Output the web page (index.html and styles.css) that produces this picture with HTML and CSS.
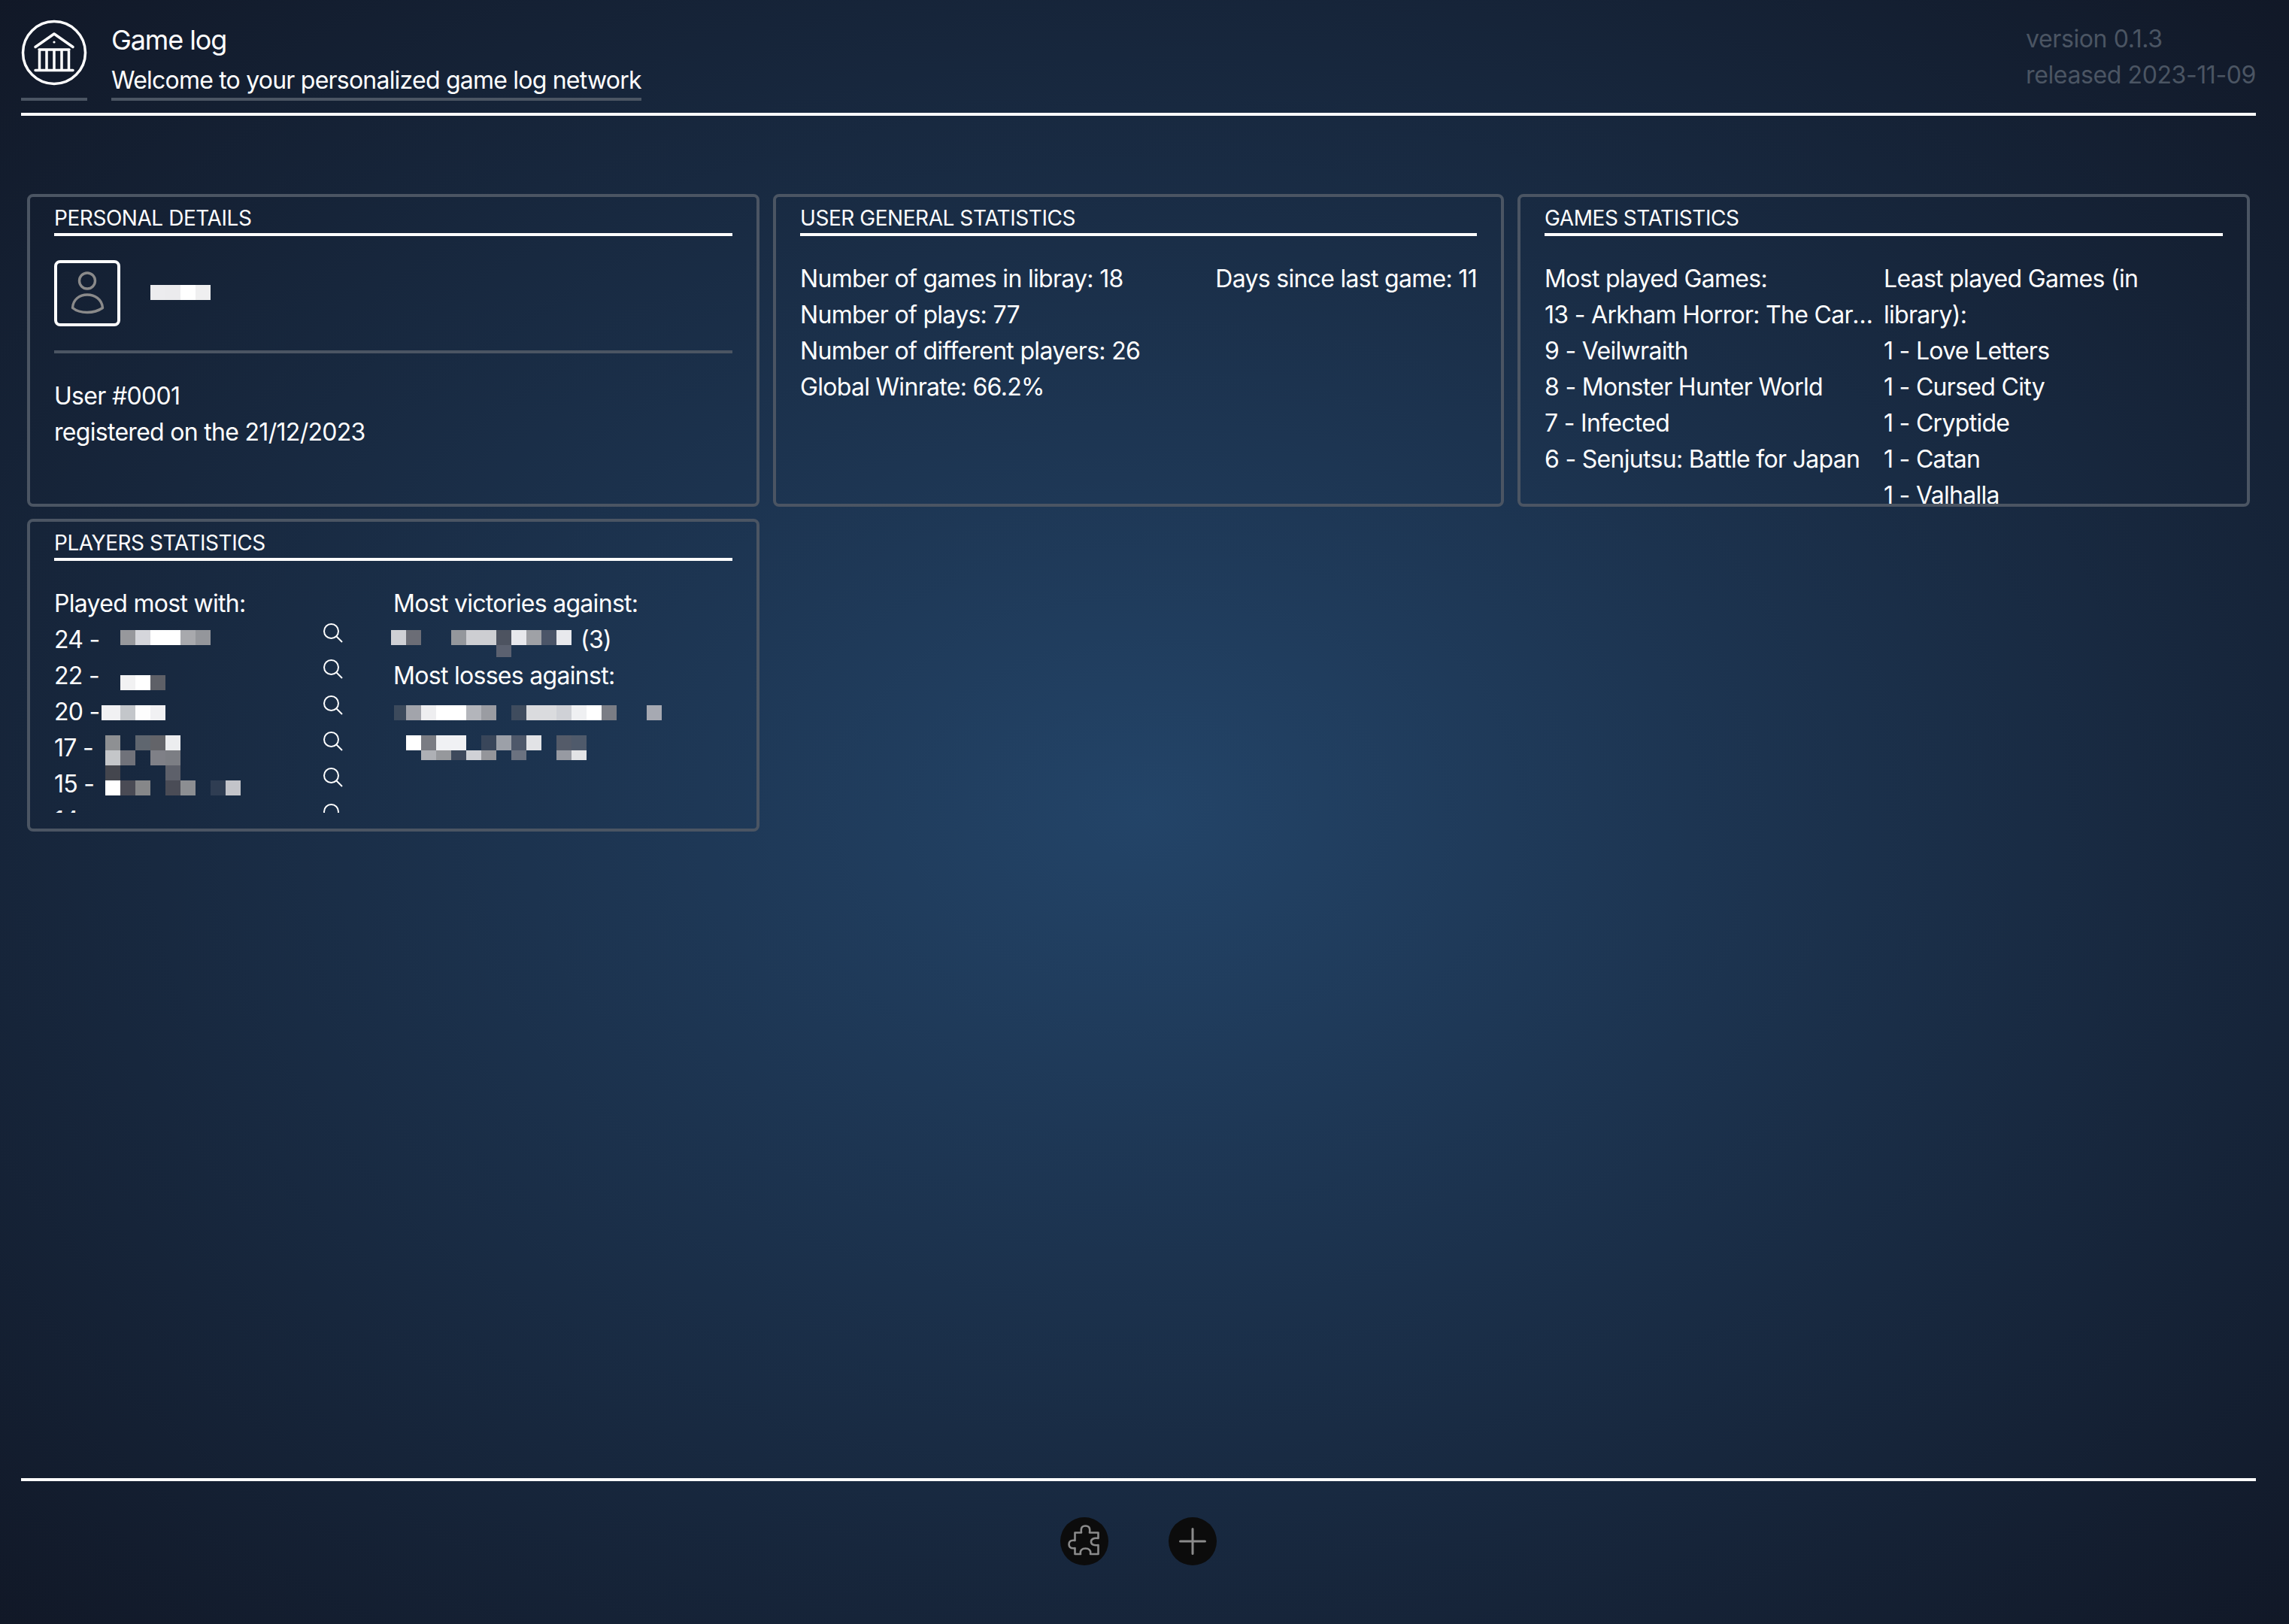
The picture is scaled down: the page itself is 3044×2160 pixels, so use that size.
FILE: index.html
```html
<!DOCTYPE html>
<html lang="en">
<head>
<meta charset="utf-8">
<title>Game log</title>
<link rel="stylesheet" href="styles.css">
</head>
<body>
<header class="top">
  <div class="logo">
    <svg class="logo-svg" width="88" height="88" viewBox="0 0 88 88" fill="none" stroke="#fff" stroke-width="3.5" stroke-linecap="round" stroke-linejoin="round">
      <circle cx="44" cy="44" r="41.5"/>
      <path d="M19 36.5 44 19 69 36.5"/>
      <path d="M24 40H64M24.5 40V66M34 42V66M44 42V66M54 42V66M63.5 40V66M19 67.5H69"/>
      <circle cx="44" cy="30" r="1.6" fill="#fff" stroke="none"/>
    </svg>
  </div>
  <div class="brand">
    <div class="brand-title">Game log</div>
    <div class="brand-sub">Welcome to your personalized game log network</div>
  </div>
  <div class="version">
    <div>version 0.1.3</div>
    <div>released 2023-11-09</div>
  </div>
</header>

<main class="board">
  <section class="card">
    <h2 class="card-title">PERSONAL DETAILS</h2>
    <div class="identity">
      <div class="avatar">
        <svg width="80" height="80" viewBox="0 0 80 80" fill="none" stroke="#8a8a8a" stroke-width="3.4" stroke-linejoin="round">
          <circle cx="40" cy="23.5" r="10.5"/>
          <path d="M20.5 59.5C21 48 30 42 40 42 50 42 59.5 48 60.5 59.5 54 64 46 65.5 40 65.5 34 65.5 26 64 20.5 59.5Z"/>
        </svg>
      </div>
      <svg class="name-mosaic" width="80" height="20" viewBox="0 0 80 20">
        <rect x="0" width="20" height="20" fill="#ececee"/>
        <rect x="20" width="20" height="20" fill="#ebebed"/>
        <rect x="40" width="20" height="20" fill="#ffffff"/>
        <rect x="60" width="20" height="20" fill="#efeff0"/>
      </svg>
    </div>
    <div class="user-info">
      <div>User #0001</div>
      <div>registered on the 21/12/2023</div>
    </div>
  </section>

  <section class="card">
    <h2 class="card-title">USER GENERAL STATISTICS</h2>
    <div class="general">
      <div>
        <div>Number of games in libray: 18</div>
        <div>Number of plays: 77</div>
        <div>Number of different players: 26</div>
        <div>Global Winrate: 66.2%</div>
      </div>
      <div>Days since last game: 11</div>
    </div>
  </section>

  <section class="card">
    <h2 class="card-title">GAMES STATISTICS</h2>
    <div class="columns">
      <div class="col col-most">
        <div>Most played Games:</div>
        <div class="ellipsis">13 - Arkham Horror: The Card Game</div>
        <div class="ellipsis">9 - Veilwraith</div>
        <div class="ellipsis">8 - Monster Hunter World</div>
        <div class="ellipsis">7 - Infected</div>
        <div class="ellipsis">6 - Senjutsu: Battle for Japan</div>
      </div>
      <div class="col">
        <div>Least played Games (in library):</div>
        <div>1 - Love Letters</div>
        <div>1 - Cursed City</div>
        <div>1 - Cryptide</div>
        <div>1 - Catan</div>
        <div>1 - Valhalla</div>
      </div>
    </div>
  </section>

  <section class="card card-players">
    <h2 class="card-title">PLAYERS STATISTICS</h2>
    <div class="columns">
      <div>
        <div>Played most with:</div>
        <div class="players-list">
          <div class="player-row">24 -<svg class="search" width="26" height="26" viewBox="0 0 26 26"><circle cx="10.5" cy="10.5" r="9.5"/><path d="M17.5 17.5 25 25"/></svg></div>
          <div class="player-row">22 -<svg class="search" width="26" height="26" viewBox="0 0 26 26"><circle cx="10.5" cy="10.5" r="9.5"/><path d="M17.5 17.5 25 25"/></svg></div>
          <div class="player-row">20 -<svg class="search" width="26" height="26" viewBox="0 0 26 26"><circle cx="10.5" cy="10.5" r="9.5"/><path d="M17.5 17.5 25 25"/></svg></div>
          <div class="player-row">17 -<svg class="search" width="26" height="26" viewBox="0 0 26 26"><circle cx="10.5" cy="10.5" r="9.5"/><path d="M17.5 17.5 25 25"/></svg></div>
          <div class="player-row">15 -<svg class="search" width="26" height="26" viewBox="0 0 26 26"><circle cx="10.5" cy="10.5" r="9.5"/><path d="M17.5 17.5 25 25"/></svg></div>
          <div class="player-row">14 -<svg class="search" width="26" height="26" viewBox="0 0 26 26"><circle cx="10.5" cy="10.5" r="9.5"/><path d="M17.5 17.5 25 25"/></svg></div>
        </div>
      </div>
      <div>
        <div>Most victories against:</div>
        <div class="victory-count">(3)</div>
        <div>Most losses against:</div>
      </div>
    </div>
    <svg class="players-mosaic" width="974" height="416" viewBox="36 690 974 416">
      <g>
        <rect x="160" y="838" width="20" height="20" fill="#97989c"/><rect x="180" y="838" width="20" height="20" fill="#d5d6db"/><rect x="200" y="838" width="40" height="20" fill="#ffffff"/><rect x="240" y="838" width="20" height="20" fill="#a8a9ad"/><rect x="260" y="838" width="20" height="20" fill="#94969b"/>
        <rect x="160" y="898" width="20" height="20" fill="#f2f2f3"/><rect x="180" y="898" width="20" height="20" fill="#ffffff"/><rect x="200" y="898" width="20" height="20" fill="#5e6067"/>
        <rect x="135" y="938" width="25" height="20" fill="#f1f1f3"/><rect x="160" y="938" width="20" height="20" fill="#c3c6ca"/><rect x="180" y="938" width="20" height="20" fill="#fdfdfd"/><rect x="200" y="938" width="20" height="20" fill="#f1f1f3"/>
        <rect x="140" y="978" width="20" height="20" fill="#8e9093"/><rect x="180" y="978" width="20" height="20" fill="#5f666f"/><rect x="200" y="978" width="20" height="20" fill="#636469"/><rect x="220" y="978" width="20" height="20" fill="#ecedef"/>
        <rect x="140" y="998" width="20" height="20" fill="#c4c6c9"/><rect x="160" y="998" width="20" height="20" fill="#70727a"/><rect x="200" y="998" width="20" height="20" fill="#7f8087"/><rect x="220" y="998" width="20" height="20" fill="#7c7e84"/>
        <rect x="140" y="1018" width="20" height="20" fill="#44464e"/><rect x="220" y="1018" width="20" height="20" fill="#5d606a"/>
        <rect x="140" y="1038" width="20" height="20" fill="#ffffff"/><rect x="160" y="1038" width="20" height="20" fill="#4a4b55"/><rect x="180" y="1038" width="20" height="20" fill="#868789"/><rect x="220" y="1038" width="20" height="20" fill="#4a4c56"/><rect x="240" y="1038" width="20" height="20" fill="#8c8e92"/><rect x="280" y="1038" width="20" height="20" fill="#2f3d52"/><rect x="300" y="1038" width="20" height="20" fill="#c3c4c9"/>
      </g>
      <g>
        <rect x="520" y="838" width="20" height="20" fill="#cfd0d5"/><rect x="540" y="838" width="20" height="20" fill="#6b6d76"/><rect x="600" y="838" width="20" height="20" fill="#94979c"/><rect x="620" y="838" width="40" height="20" fill="#cdced2"/><rect x="660" y="838" width="20" height="20" fill="#4d5360"/><rect x="680" y="838" width="20" height="20" fill="#e7e8ec"/><rect x="700" y="838" width="20" height="20" fill="#9fa1a6"/><rect x="720" y="838" width="20" height="20" fill="#4b5568"/><rect x="740" y="838" width="20" height="20" fill="#e8e9ed"/>
        <rect x="660" y="858" width="20" height="16" fill="#5b6170"/>
      </g>
      <g>
        <rect x="524" y="938" width="16" height="20" fill="#3c4a5c"/><rect x="540" y="938" width="20" height="20" fill="#a2a4ab"/><rect x="560" y="938" width="20" height="20" fill="#eeeef0"/><rect x="580" y="938" width="40" height="20" fill="#ffffff"/><rect x="620" y="938" width="20" height="20" fill="#b3b5bb"/><rect x="640" y="938" width="20" height="20" fill="#9a9ca2"/>
        <rect x="680" y="938" width="20" height="20" fill="#3f4c5e"/><rect x="700" y="938" width="40" height="20" fill="#dadbde"/><rect x="740" y="938" width="20" height="20" fill="#cfd1d6"/><rect x="760" y="938" width="20" height="20" fill="#eff0f2"/><rect x="780" y="938" width="20" height="20" fill="#ffffff"/><rect x="800" y="938" width="20" height="20" fill="#7a7d85"/><rect x="860" y="938" width="20" height="20" fill="#a6a9b2"/>
        <rect x="540" y="978" width="20" height="20" fill="#ffffff"/><rect x="560" y="978" width="20" height="20" fill="#7a7c83"/><rect x="580" y="978" width="40" height="20" fill="#f0f1f4"/><rect x="640" y="978" width="20" height="20" fill="#39465a"/><rect x="660" y="978" width="20" height="20" fill="#9ca0a8"/><rect x="680" y="978" width="20" height="20" fill="#4e586a"/><rect x="700" y="978" width="20" height="20" fill="#e2e3e6"/><rect x="740" y="978" width="20" height="20" fill="#545b69"/><rect x="760" y="978" width="20" height="20" fill="#4f5a6b"/>
        <rect x="560" y="998" width="20" height="13" fill="#aeb0b5"/><rect x="580" y="998" width="20" height="13" fill="#96989c"/><rect x="600" y="998" width="20" height="13" fill="#3e495c"/><rect x="620" y="998" width="20" height="13" fill="#d0d1d6"/><rect x="640" y="998" width="20" height="13" fill="#94959a"/><rect x="680" y="998" width="20" height="13" fill="#6b7280"/><rect x="740" y="998" width="20" height="13" fill="#979aa2"/><rect x="760" y="998" width="20" height="13" fill="#e3e4e6"/>
      </g>
    </svg>
  </section>
</main>

<footer class="bottom">
  <button class="round-btn" type="button" aria-label="Games">
    <svg width="64" height="64" viewBox="0 0 64 64" fill="none" stroke="#8b8b8b" stroke-width="2.6" stroke-linejoin="round">
      <path d="M19.5 20.5H28C27 14 29 11.5 33.5 11.5 38 11.5 40 14 39 20.5H50.5V28C44 27 41 29.5 41 32.5 41 36 44 38 50.5 37V49H40C41 44 38 41.5 33.5 41.5 29 41.5 26 44 27 49H19.5V41C13 42 11.5 39 11.5 36 11.5 33 13 30 19.5 31Z"/>
    </svg>
  </button>
  <button class="round-btn" type="button" aria-label="Add">
    <svg width="64" height="64" viewBox="0 0 64 64" fill="none" stroke="#8b8b8b" stroke-width="3" stroke-linecap="round">
      <path d="M32 15.5V48.5M15.5 32H48.5"/>
    </svg>
  </button>
</footer>
</body>
</html>
```

FILE: styles.css
```css
* { box-sizing: border-box; }

html, body { margin: 0; height: 100%; }

body {
  display: flex;
  flex-direction: column;
  height: 2160px;
  overflow: hidden;
  color: #fff;
  font-family: Inter, "Liberation Sans", sans-serif;
  font-size: 32px;
  line-height: 48px;
  letter-spacing: -0.7px;
  background: radial-gradient(ellipse at center, #234468 0%, #111827 100%);
}

.top {
  display: flex;
  align-items: flex-start;
  margin: 0 44px 0 28px;
  padding: 26px 0 16px;
  border-bottom: 4px solid #fff;
  height: 154px;
}

.logo {
  width: 88px;
  height: 108px;
  border-bottom: 4px solid #4b5563;
}

.logo-svg { display: block; }

.brand {
  margin-left: 32px;
  height: 108px;
  border-bottom: 4px solid #4b5563;
}

.brand-title {
  font-size: 36px;
  line-height: 54px;
  letter-spacing: -1.1px;
}

.brand-sub {
  margin-top: 3px;
  letter-spacing: -0.78px;
  line-height: 47px;
}

.version {
  margin-left: auto;
  margin-top: 2px;
  color: #4b5563;
  letter-spacing: -0.4px;
}

.board {
  flex: 1;
  display: grid;
  grid-template-columns: 974px 972px 974px;
  grid-template-rows: 416px 416px;
  gap: 16px 18px;
  align-content: start;
  padding: 104px 52px 0 36px;
}

.card {
  position: relative;
  padding: 8px 32px 0;
  border: 4px solid #4b5563;
  border-radius: 8px;
  overflow: hidden;
}

.card-title {
  margin: 0;
  height: 44px;
  border-bottom: 4px solid #fff;
  font-size: 28px;
  font-weight: 400;
  line-height: 40px;
  letter-spacing: -0.45px;
}

.identity {
  display: flex;
  align-items: center;
  gap: 40px;
  margin-top: 32px;
  padding-bottom: 32px;
  border-bottom: 4px solid #4b5563;
}

.avatar {
  width: 88px;
  height: 88px;
  border: 4px solid #fff;
  border-radius: 8px;
}

.avatar svg, .name-mosaic { display: block; }

.name-mosaic { margin-top: -2px; }

.user-info { margin-top: 33px; }

.general {
  display: flex;
  justify-content: space-between;
  margin-top: 33px;
}

.columns {
  display: grid;
  grid-template-columns: 1fr 1fr;
  margin-top: 33px;
}

.col { min-width: 0; padding-right: 16px; }

.col-most { padding-right: 8px; }

.ellipsis {
  overflow: hidden;
  white-space: nowrap;
  text-overflow: ellipsis;
}

.players-list {
  height: 254px;
  padding-right: 67px;
  overflow: hidden;
}

.player-row {
  display: flex;
  justify-content: space-between;
  height: 48px;
}

.search {
  margin-top: 2px;
  fill: none;
  stroke: #fff;
  stroke-width: 2;
}

.victory-count { padding-left: 249px; }

.players-mosaic {
  position: absolute;
  left: -4px;
  top: -4px;
}

.bottom {
  display: flex;
  justify-content: center;
  gap: 80px;
  height: 194px;
  margin: 0 44px 0 28px;
  padding: 48px 0 0;
  border-top: 4px solid #fff;
}

.round-btn {
  width: 64px;
  height: 64px;
  padding: 0;
  border: 0;
  border-radius: 50%;
  background: #0c0c0c;
}

.round-btn svg { display: block; }
```
